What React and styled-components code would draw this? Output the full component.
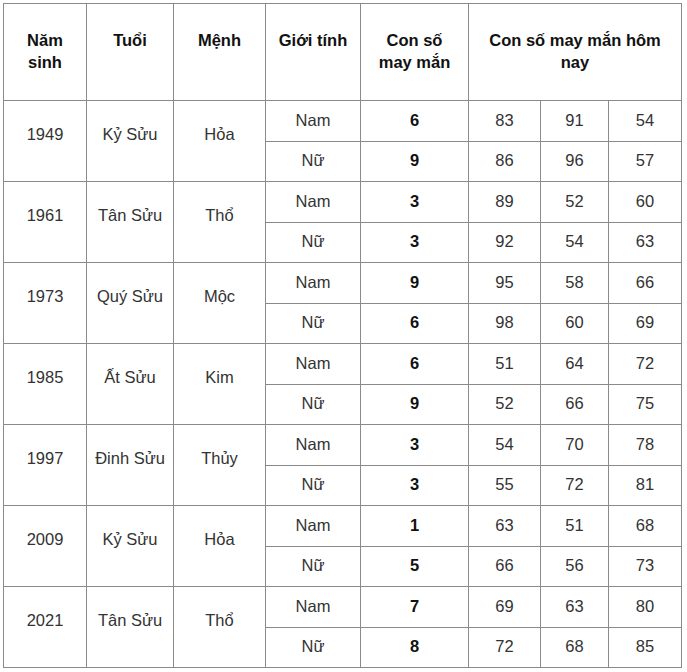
import React from 'react';
import styled, { createGlobalStyle } from "styled-components";

const GlobalStyle = createGlobalStyle`
  body {
    margin: 0;
    background: #ffffff;
    font-family: "Liberation Sans", Arial, sans-serif;
  }
`;

const rows = [
  { year: "1949", age: "Kỷ Sửu", element: "Hỏa", nam: [6, 83, 91, 54], nu: [9, 86, 96, 57] },
  { year: "1961", age: "Tân Sửu", element: "Thổ", nam: [3, 89, 52, 60], nu: [3, 92, 54, 63] },
  { year: "1973", age: "Quý Sửu", element: "Mộc", nam: [9, 95, 58, 66], nu: [6, 98, 60, 69] },
  { year: "1985", age: "Ất Sửu", element: "Kim", nam: [6, 51, 64, 72], nu: [9, 52, 66, 75] },
  { year: "1997", age: "Đinh Sửu", element: "Thủy", nam: [3, 54, 70, 78], nu: [3, 55, 72, 81] },
  { year: "2009", age: "Kỷ Sửu", element: "Hỏa", nam: [1, 63, 51, 68], nu: [5, 66, 56, 73] },
  { year: "2021", age: "Tân Sửu", element: "Thổ", nam: [7, 69, 63, 80], nu: [8, 72, 68, 85] },
];

export default function App() {
  return (
    <>
      <GlobalStyle />
      <Page>
        <Table>
          <HeadCell>Năm sinh</HeadCell>
          <HeadCell>Tuổi</HeadCell>
          <HeadCell>Mệnh</HeadCell>
          <HeadCell>Giới tính</HeadCell>
          <HeadCell>Con số may mắn</HeadCell>
          <HeadCell $span={3}>Con số may mắn hôm nay</HeadCell>
          {rows.map((row) => (
            <React.Fragment key={row.year}>
              <GroupCell>{row.year}</GroupCell>
              <GroupCell>{row.age}</GroupCell>
              <GroupCell>{row.element}</GroupCell>
              <Cell>Nam</Cell>
              {row.nam.map((n, i) => (
                <Cell key={"a" + i} $bold={i === 0}>{n}</Cell>
              ))}
              <Cell>Nữ</Cell>
              {row.nu.map((n, i) => (
                <Cell key={"b" + i} $bold={i === 0}>{n}</Cell>
              ))}
            </React.Fragment>
          ))}
        </Table>
      </Page>
    </>
  );
}

const Page = styled.div`
  padding: 3px;
`;

const Table = styled.div`
  display: grid;
  width: 679px;
  box-sizing: border-box;
  grid-template-columns: 83px 87px 92px 95px 108px 72px 68px 73px;
  grid-template-rows: 97px repeat(7, 41px 40px);
  border-left: 1px solid #8a8a8a;
  border-top: 1px solid #8a8a8a;
  font-size: 16.5px;
  line-height: 22px;
  color: #222;
`;

const HeadCell = styled.div`
  grid-column: span ${(p) => p.$span || 1};
  box-sizing: border-box;
  border-right: 1px solid #8a8a8a;
  border-bottom: 1px solid #8a8a8a;
  padding: 25px 10px 0;
  text-align: center;
  font-weight: bold;
  color: #111;
`;

const Cell = styled.div`
  display: flex;
  align-items: center;
  justify-content: center;
  box-sizing: border-box;
  padding-bottom: 3px;
  border-right: 1px solid #8a8a8a;
  border-bottom: 1px solid #8a8a8a;
  font-weight: ${(p) => (p.$bold ? "bold" : "normal")};
  color: ${(p) => (p.$bold ? "#111" : "#333")};
`;

const GroupCell = styled(Cell)`
  grid-row: span 2;
  padding-bottom: 15px;
`;
